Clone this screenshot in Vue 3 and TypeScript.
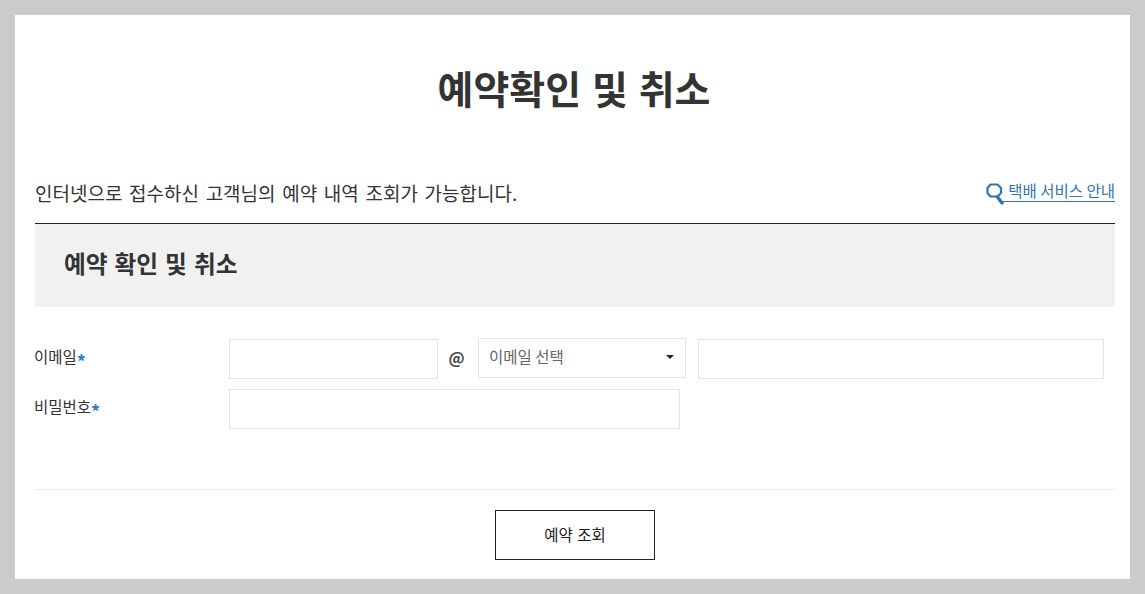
<script setup lang="ts">
const title = '예약확인 및 취소'
</script>

<template>
  <div class="page">
    <main class="panel">
      <h1 class="title">{{ title }}</h1>
      <div class="intro">
        <p class="intro-text">인터넷으로 접수하신 고객님의 예약 내역 조회가 가능합니다.</p>
        <a class="guide" href="#">
          <svg class="glass" width="19" height="22" viewBox="0 0 19 22" aria-hidden="true">
            <path d="M4.5 1.5 H11.5 L15 5 V10 L11.5 13.5 H4.5 L1.5 10 V5 Z" fill="none" stroke="#2f75ae" stroke-width="2.2" stroke-linejoin="round" />
            <path d="M11.5 14 L16 20" stroke="#2f75ae" stroke-width="3.4" stroke-linecap="round" />
          </svg>
          <span>택배 서비스 안내</span>
        </a>
      </div>
      <h2 class="section">예약 확인 및 취소</h2>
      <form class="form" @submit.prevent>
        <div class="row">
          <label class="label">이메일<em>*</em></label>
          <input class="field email-id" type="text" />
          <span class="at">@</span>
          <div class="select">
            <span>이메일 선택</span>
            <i class="caret"></i>
          </div>
          <input class="field email-domain" type="text" />
        </div>
        <div class="row">
          <label class="label">비밀번호<em>*</em></label>
          <input class="field password" type="password" />
        </div>
      </form>
      <div class="actions">
        <button class="submit" type="button">예약 조회</button>
      </div>
    </main>
  </div>
</template>

<style>
html, body { margin: 0; padding: 0; }
</style>

<style scoped>
* { box-sizing: border-box; }
.page {
  width: 1145px;
  height: 594px;
  padding: 15px;
  background: #cbcbcb;
  font-family: "Noto Sans CJK KR", "Noto Sans", sans-serif;
  color: #333;
}
.panel {
  height: 564px;
  padding: 0 15px 0 20px;
  background: #fff;
  overflow: hidden;
}
.title {
  margin: 0;
  padding: 46px 2px 0 0;
  height: 148px;
  font-size: 39px;
  line-height: 52px;
  font-weight: 700;
  word-spacing: 2px;
  text-align: center;
}
.intro {
  display: flex;
  justify-content: space-between;
  align-items: flex-start;
  height: 61px;
  border-bottom: 1px solid #222;
}
.intro-text {
  margin: 0;
  padding-top: 16px;
  font-size: 19px;
  line-height: 28px;
  word-spacing: 2.4px;
}
.guide {
  display: flex;
  align-items: flex-end;
  height: 44px;
  color: #2f75ae;
  font-size: 15.5px;
  text-decoration: none;
}
.guide span {
  display: block;
  margin: 0 0 5px -2px;
  padding-left: 5px;
  line-height: 22px;
  border-bottom: 1px solid #2f75ae;
}
.glass { display: block; margin-bottom: 2px; }
.section {
  margin: 0;
  height: 83px;
  padding-left: 29px;
  background: #f1f1f1;
  font-size: 23.7px;
  line-height: 78px;
  font-weight: 700;
  word-spacing: 1.6px;
}
.form { padding-top: 30px; height: 183px; border-bottom: 1px solid #e9e9e9; }
.row {
  display: flex;
  align-items: center;
  height: 42px;
  margin-bottom: 8px;
}
.label {
  flex: none;
  width: 194px;
  margin: -3px 0 0 -1px;
  font-size: 15.5px;
  line-height: 24px;
  color: #333;
}
.label em {
  font-style: normal;
  font-weight: 700;
  font-size: 18px;
  line-height: 1;
  vertical-align: -6px;
  color: #2f7fc0;
}
.field {
  flex: none;
  height: 40px;
  margin-top: 2px;
  border: 1px solid #e3e3e3;
  background: #fff;
  outline: none;
}
.row .field:first-of-type { margin-left: 1px; }
.email-id { width: 209px; }
.at {
  width: 37px;
  margin: -3px 3px 0 0;
  text-align: center;
  font-size: 16px;
  font-weight: 700;
  color: #444;
}
.select {
  position: relative;
  width: 208px;
  height: 40px;
  padding-left: 10px;
  margin-right: 12px;
  border: 1px solid #e3e3e3;
  font-size: 15.5px;
  line-height: 35px;
  color: #666;
}
.caret {
  position: absolute;
  top: 16px;
  right: 11px;
  border-style: solid;
  border-width: 4px 4px 0;
  border-color: #222 transparent transparent;
}
.email-domain { width: 406px; }
.password { width: 451px; }
.actions { display: flex; justify-content: center; padding-top: 20px; }
.submit {
  width: 160px;
  height: 50px;
  padding: 0 0 2px;
  border: 1px solid #222;
  background: #fff;
  color: #222;
  font-family: inherit;
  font-size: 15.5px;
  word-spacing: 1px;
}
</style>
